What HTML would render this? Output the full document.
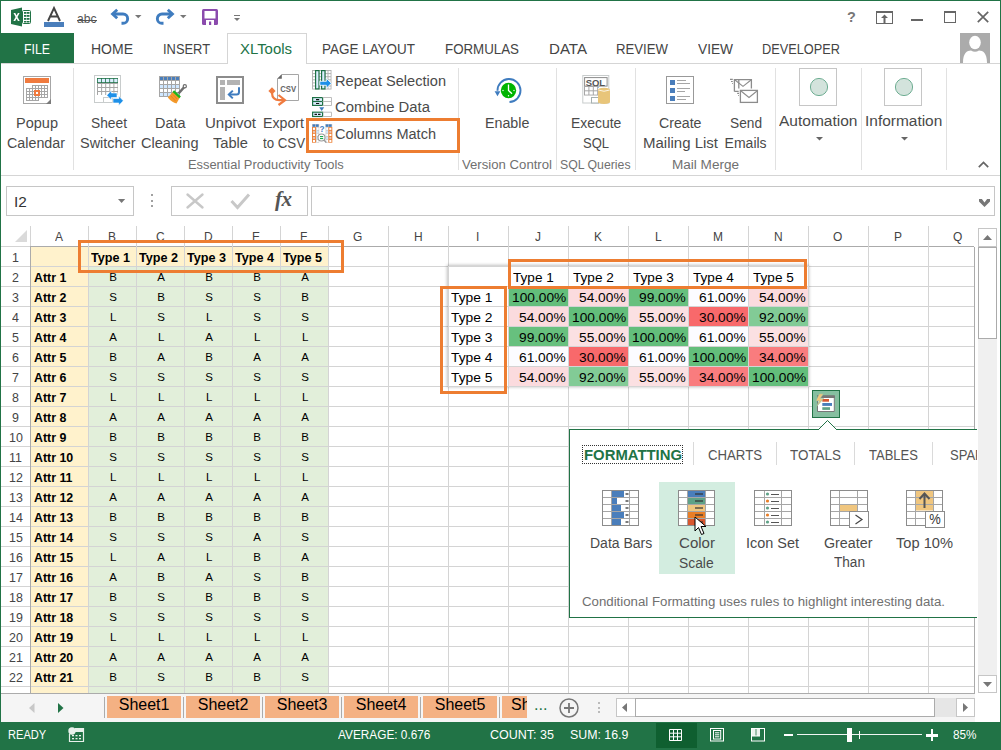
<!DOCTYPE html><html><head><meta charset="utf-8"><title>Excel</title><style>*{margin:0;padding:0;box-sizing:border-box}
html,body{width:1001px;height:750px;overflow:hidden;background:#fff;font-family:"Liberation Sans",sans-serif;position:relative}
.ab{position:absolute}
.t{position:absolute;white-space:nowrap;line-height:1}
svg{position:absolute;overflow:visible}</style></head><body>
<div class="ab" style="left:0px;top:0px;width:1001px;height:722px;border:1px solid #217346;border-bottom:none"></div>
<svg style="left:11px;top:7px" width="21" height="20" viewBox="0 0 21 20"><path d="M0 3 L11 0.5 V19.5 L0 17 Z" fill="#217346"/>
<rect x="11.5" y="3.5" width="8" height="13" rx="1" fill="#fff" stroke="#217346" stroke-width="1"/>
<g fill="#217346"><rect x="13" y="5" width="2.5" height="1.8"/><rect x="16" y="5" width="2.5" height="1.8"/>
<rect x="13" y="8" width="2.5" height="1.8"/><rect x="16" y="8" width="2.5" height="1.8"/>
<rect x="13" y="11" width="2.5" height="1.8"/><rect x="16" y="11" width="2.5" height="1.8"/>
<rect x="13" y="14" width="2.5" height="1.5"/><rect x="16" y="14" width="2.5" height="1.5"/></g>
<path d="M2.5 6 L4.3 6 L5.6 8.6 L6.9 6 L8.6 6 L6.5 10 L8.7 14 L6.9 14 L5.6 11.4 L4.2 14 L2.4 14 L4.6 10 Z" fill="#fff"/></svg>
<svg style="left:47px;top:7px" width="14" height="15" viewBox="0 0 14 15"><path d="M1 14 L7 1 L13 14 M3.3 9.5 H10.7" fill="none" stroke="#444" stroke-width="1.9"/></svg>
<div class="ab" style="left:44px;top:22px;width:20px;height:5px;background:#4A7EBB"></div>
<div class="t" style="left:77.00px;top:11.57px;font-size:13.5px;color:#555;transform:scaleX(0.8959);transform-origin:0 0;">abc</div>
<div class="ab" style="left:77px;top:19.5px;width:20px;height:1px;background:#555"></div>
<svg style="left:110px;top:8px" width="21" height="19" viewBox="0 0 21 19"><path d="M3 6 H13 A4.65 4.65 0 0 1 13 15.3 H11.5" fill="none" stroke="#3F7CBF" stroke-width="2.9"/><path d="M7.2 1.8 L2.6 6 L7.2 10.3" fill="none" stroke="#3F7CBF" stroke-width="2.9"/></svg>
<svg style="left:135px;top:15px" width="7" height="4" viewBox="0 0 7 4"><path d="M0 0 H6.5 L3.25 3.2Z" fill="#777"/></svg>
<svg style="left:155px;top:8px" width="21" height="19" viewBox="0 0 21 19"><path d="M17 6 H7 A4.65 4.65 0 0 0 7 15.3 H8.5" fill="none" stroke="#3F7CBF" stroke-width="2.9"/><path d="M12.8 1.8 L17.4 6 L12.8 10.3" fill="none" stroke="#3F7CBF" stroke-width="2.9"/></svg>
<svg style="left:180px;top:15px" width="7" height="4" viewBox="0 0 7 4"><path d="M0 0 H6.5 L3.25 3.2Z" fill="#777"/></svg>
<svg style="left:202px;top:9px" width="16" height="16" viewBox="0 0 16 16"><rect x="0" y="0" width="16" height="16" rx="1.5" fill="#8B4BAD"/><rect x="2.5" y="2" width="11" height="7.5" fill="#fff"/><rect x="4" y="11" width="8" height="5" fill="#fff"/><rect x="7" y="12.5" width="2.2" height="3.5" fill="#8B4BAD"/></svg>
<svg style="left:234px;top:15px" width="6" height="7" viewBox="0 0 6 7"><rect x="0" y="0" width="6" height="1" fill="#777"/><path d="M0 3 H6 L3 6Z" fill="#777"/></svg>
<div class="t" style="left:846.50px;top:9.18px;font-size:15.5px;color:#777;font-weight:bold;transform:scaleX(0.9294);transform-origin:0 0;">?</div>
<svg style="left:876px;top:11px" width="17" height="13" viewBox="0 0 17 13"><rect x="0.5" y="0.5" width="16" height="12" fill="none" stroke="#666"/><rect x="0" y="0" width="17" height="2" fill="#666"/><path d="M8.5 3.5 L5 7 H7.5 V12 H9.5 V7 H12 Z" fill="#666"/></svg>
<div class="ab" style="left:911px;top:19px;width:12px;height:2px;background:#666"></div>
<svg style="left:944px;top:11px" width="12" height="12" viewBox="0 0 12 12"><rect x="0.5" y="0.5" width="11" height="11" fill="none" stroke="#666"/><rect x="0" y="0" width="12" height="2" fill="#666"/></svg>
<svg style="left:977px;top:11px" width="12" height="12" viewBox="0 0 12 12"><path d="M0.8 0.8 L11.2 11.2 M11.2 0.8 L0.8 11.2" stroke="#666" stroke-width="1.7"/></svg>
<div class="ab" style="left:1px;top:33px;width:73px;height:30px;background:#217346"></div>
<div class="t" style="left:24.00px;top:42.15px;font-size:14px;color:#fff;transform:scaleX(0.8794);transform-origin:0 0;">FILE</div>
<div class="ab" style="left:1px;top:63px;width:999px;height:1px;background:#D5D5D5"></div>
<div class="ab" style="left:227px;top:33px;width:80px;height:31px;background:#fff;border:1px solid #D5D5D5;border-bottom:none"></div>
<div class="t" style="left:91.00px;top:42.15px;font-size:14px;color:#444;">HOME</div>
<div class="t" style="left:163.00px;top:42.15px;font-size:14px;color:#444;transform:scaleX(0.9200);transform-origin:0 0;">INSERT</div>
<div class="t" style="left:240.00px;top:42.15px;font-size:14px;color:#217346;transform:scaleX(1.0663);transform-origin:0 0;">XLTools</div>
<div class="t" style="left:321.50px;top:42.15px;font-size:14px;color:#444;transform:scaleX(0.9615);transform-origin:0 0;">PAGE LAYOUT</div>
<div class="t" style="left:444.50px;top:42.15px;font-size:14px;color:#444;transform:scaleX(0.9513);transform-origin:0 0;">FORMULAS</div>
<div class="t" style="left:548.50px;top:42.15px;font-size:14px;color:#444;transform:scaleX(1.0777);transform-origin:0 0;">DATA</div>
<div class="t" style="left:616.00px;top:42.15px;font-size:14px;color:#444;transform:scaleX(0.9416);transform-origin:0 0;">REVIEW</div>
<div class="t" style="left:697.50px;top:42.15px;font-size:14px;color:#444;transform:scaleX(0.9782);transform-origin:0 0;">VIEW</div>
<div class="t" style="left:761.50px;top:42.15px;font-size:14px;color:#444;transform:scaleX(0.9114);transform-origin:0 0;">DEVELOPER</div>
<svg style="left:960px;top:33px" width="30" height="30" viewBox="0 0 30 30"><rect width="30" height="30" fill="#ABABAB"/><ellipse cx="15" cy="9.5" rx="5.8" ry="6.8" fill="#fff"/><path d="M3 30 C3 20 7 17.5 11 17.5 Q15 20 19 17.5 C23 17.5 27 20 27 30Z" fill="#fff"/></svg>
<div class="ab" style="left:1px;top:175px;width:999px;height:1px;background:#D5D5D5"></div>
<div class="ab" style="left:73px;top:68px;width:1px;height:102px;background:#E1E1E1"></div>
<div class="ab" style="left:458px;top:68px;width:1px;height:102px;background:#E1E1E1"></div>
<div class="ab" style="left:556px;top:68px;width:1px;height:102px;background:#E1E1E1"></div>
<div class="ab" style="left:635px;top:68px;width:1px;height:102px;background:#E1E1E1"></div>
<div class="ab" style="left:775px;top:68px;width:1px;height:102px;background:#E1E1E1"></div>
<div class="ab" style="left:861px;top:68px;width:1px;height:102px;background:#E1E1E1"></div>
<div class="ab" style="left:946px;top:68px;width:1px;height:102px;background:#E1E1E1"></div>
<div class="t" style="left:15.50px;top:116.15px;font-size:14px;color:#4A4A4A;transform:scaleX(1.0375);transform-origin:0 0;">Popup</div>
<div class="t" style="left:7.00px;top:136.15px;font-size:14px;color:#4A4A4A;transform:scaleX(1.0209);transform-origin:0 0;">Calendar</div>
<div class="t" style="left:90.50px;top:116.15px;font-size:14px;color:#4A4A4A;transform:scaleX(0.9840);transform-origin:0 0;">Sheet</div>
<div class="t" style="left:80.00px;top:136.15px;font-size:14px;color:#4A4A4A;transform:scaleX(1.0339);transform-origin:0 0;">Switcher</div>
<div class="t" style="left:154.50px;top:116.15px;font-size:14px;color:#4A4A4A;transform:scaleX(1.0314);transform-origin:0 0;">Data</div>
<div class="t" style="left:141.00px;top:136.15px;font-size:14px;color:#4A4A4A;transform:scaleX(1.0405);transform-origin:0 0;">Cleaning</div>
<div class="t" style="left:205.00px;top:116.15px;font-size:14px;color:#4A4A4A;transform:scaleX(1.0744);transform-origin:0 0;">Unpivot</div>
<div class="t" style="left:213.00px;top:136.15px;font-size:14px;color:#4A4A4A;transform:scaleX(1.0458);transform-origin:0 0;">Table</div>
<div class="t" style="left:262.50px;top:116.15px;font-size:14px;color:#4A4A4A;transform:scaleX(1.0133);transform-origin:0 0;">Export</div>
<div class="t" style="left:262.50px;top:136.15px;font-size:14px;color:#4A4A4A;transform:scaleX(0.9470);transform-origin:0 0;">to CSV</div>
<div class="t" style="left:335.40px;top:73.75px;font-size:14px;color:#4A4A4A;transform:scaleX(1.0410);transform-origin:0 0;">Repeat Selection</div>
<div class="t" style="left:335.40px;top:100.45px;font-size:14px;color:#4A4A4A;transform:scaleX(1.0616);transform-origin:0 0;">Combine Data</div>
<div class="t" style="left:335.40px;top:127.15px;font-size:14px;color:#4A4A4A;transform:scaleX(1.0385);transform-origin:0 0;">Columns Match</div>
<div class="t" style="left:187.50px;top:159.02px;font-size:12.5px;color:#707070;transform:scaleX(1.0300);transform-origin:0 0;">Essential Productivity Tools</div>
<div class="t" style="left:484.60px;top:115.95px;font-size:14px;color:#4A4A4A;transform:scaleX(1.0185);transform-origin:0 0;">Enable</div>
<div class="t" style="left:462.40px;top:159.02px;font-size:12.5px;color:#707070;transform:scaleX(1.0531);transform-origin:0 0;">Version Control</div>
<div class="t" style="left:570.50px;top:115.95px;font-size:14px;color:#4A4A4A;transform:scaleX(0.9943);transform-origin:0 0;">Execute</div>
<div class="t" style="left:583.00px;top:135.65px;font-size:14px;color:#4A4A4A;transform:scaleX(0.9281);transform-origin:0 0;">SQL</div>
<div class="t" style="left:560.40px;top:159.02px;font-size:12.5px;color:#707070;transform:scaleX(0.9827);transform-origin:0 0;">SQL Queries</div>
<div class="t" style="left:659.20px;top:115.95px;font-size:14px;color:#4A4A4A;transform:scaleX(1.0114);transform-origin:0 0;">Create</div>
<div class="t" style="left:642.60px;top:135.65px;font-size:14px;color:#4A4A4A;transform:scaleX(1.0710);transform-origin:0 0;">Mailing List</div>
<div class="t" style="left:729.80px;top:115.95px;font-size:14px;color:#4A4A4A;transform:scaleX(0.9787);transform-origin:0 0;">Send</div>
<div class="t" style="left:724.60px;top:135.65px;font-size:14px;color:#4A4A4A;">Emails</div>
<div class="t" style="left:671.60px;top:159.02px;font-size:12.5px;color:#707070;transform:scaleX(1.0837);transform-origin:0 0;">Mail Merge</div>
<div class="t" style="left:779.20px;top:113.95px;font-size:14px;color:#4A4A4A;transform:scaleX(1.1084);transform-origin:0 0;">Automation</div>
<div class="t" style="left:865.30px;top:113.95px;font-size:14px;color:#4A4A4A;transform:scaleX(1.1037);transform-origin:0 0;">Information</div>
<div class="ab" style="left:306px;top:118px;width:154px;height:35px;border:3px solid #ED7D31"></div>
<div class="ab" style="left:799px;top:68px;width:38px;height:38px;border:1px solid #C6C6C6;background:#fff"></div>
<svg style="left:809px;top:77px" width="20" height="20" viewBox="0 0 20 20"><circle cx="10" cy="10" r="8.6" fill="#D3E3DC" stroke="#6FAE93" stroke-width="1"/></svg>
<svg style="left:815.5px;top:137px" width="7" height="4" viewBox="0 0 7 4"><path d="M0 0 H7 L3.5 3.5Z" fill="#666"/></svg>
<div class="ab" style="left:884px;top:68px;width:38px;height:38px;border:1px solid #C6C6C6;background:#fff"></div>
<svg style="left:894px;top:77px" width="20" height="20" viewBox="0 0 20 20"><circle cx="10" cy="10" r="8.6" fill="#D3E3DC" stroke="#6FAE93" stroke-width="1"/></svg>
<svg style="left:900.5px;top:137px" width="7" height="4" viewBox="0 0 7 4"><path d="M0 0 H7 L3.5 3.5Z" fill="#666"/></svg>
<svg style="left:978px;top:161px" width="11" height="7" viewBox="0 0 11 7"><path d="M0.8 6.2 L5.5 1.5 L10.2 6.2" fill="none" stroke="#666" stroke-width="1.7"/></svg>
<svg style="left:23px;top:76px" width="28" height="28" viewBox="0 0 28 28"><rect x="0.5" y="0.5" width="27" height="27" fill="#fff" stroke="#A6A6A6"/><rect x="2" y="2" width="24" height="5" fill="#F07B3F"/><rect x="9" y="9" width="16" height="4" fill="#A6A6A6"/><rect x="10" y="10" width="2" height="2" fill="#fff"/><rect x="13" y="10" width="2" height="2" fill="#fff"/><rect x="16" y="10" width="2" height="2" fill="#fff"/><rect x="19" y="10" width="2" height="2" fill="#fff"/><rect x="22" y="10" width="2" height="2" fill="#fff"/><rect x="3" y="12" width="22" height="4" fill="#A6A6A6"/><rect x="4" y="13" width="2" height="2" fill="#fff"/><rect x="7" y="13" width="2" height="2" fill="#fff"/><rect x="10" y="13" width="2" height="2" fill="#fff"/><rect x="13" y="13" width="2" height="2" fill="#fff"/><rect x="16" y="13" width="2" height="2" fill="#fff"/><rect x="19" y="13" width="2" height="2" fill="#fff"/><rect x="22" y="13" width="2" height="2" fill="#fff"/><rect x="3" y="15" width="22" height="4" fill="#A6A6A6"/><rect x="4" y="16" width="2" height="2" fill="#fff"/><rect x="7" y="16" width="2" height="2" fill="#fff"/><rect x="10" y="16" width="2" height="2" fill="#fff"/><rect x="13" y="16" width="2" height="2" fill="#fff"/><rect x="16" y="16" width="2" height="2" fill="#fff"/><rect x="19" y="16" width="2" height="2" fill="#fff"/><rect x="22" y="16" width="2" height="2" fill="#fff"/><rect x="3" y="18" width="22" height="4" fill="#A6A6A6"/><rect x="4" y="19" width="2" height="2" fill="#fff"/><rect x="7" y="19" width="2" height="2" fill="#fff"/><rect x="10" y="19" width="2" height="2" fill="#fff"/><rect x="13" y="19" width="2" height="2" fill="#fff"/><rect x="16" y="19" width="2" height="2" fill="#fff"/><rect x="19" y="19" width="2" height="2" fill="#fff"/><rect x="22" y="19" width="2" height="2" fill="#fff"/><rect x="3" y="21" width="13" height="4" fill="#A6A6A6"/><rect x="4" y="22" width="2" height="2" fill="#fff"/><rect x="7" y="22" width="2" height="2" fill="#fff"/><rect x="10" y="22" width="2" height="2" fill="#fff"/><rect x="13" y="22" width="2" height="2" fill="#fff"/><rect x="11" y="14" width="6" height="6" fill="#F07B3F"/><rect x="13" y="16" width="2" height="2" fill="#fff"/><path d="M23 28 L28 23 V28Z" fill="#7A7A7A"/></svg>
<svg style="left:94px;top:75px" width="30" height="31" viewBox="0 0 30 31"><rect x="0.5" y="0.5" width="26" height="27" fill="#fff" stroke="#C8CCCC"/><rect x="3" y="3" width="21" height="5" fill="#1E7145"/><rect x="3.8" y="3.8" width="3.3" height="3.4" fill="#DDEEFF"/><rect x="7.9" y="3.8" width="3.3" height="3.4" fill="#DDEEFF"/><rect x="12.0" y="3.8" width="3.3" height="3.4" fill="#DDEEFF"/><rect x="16.1" y="3.8" width="3.3" height="3.4" fill="#DDEEFF"/><rect x="20.2" y="3.8" width="3.3" height="3.4" fill="#DDEEFF"/><rect x="3" y="8" width="21" height="12" fill="#A6A6A6"/><rect x="4.0" y="9" width="3.1" height="3" fill="#fff"/><rect x="8.1" y="9" width="3.1" height="3" fill="#fff"/><rect x="12.2" y="9" width="3.1" height="3" fill="#fff"/><rect x="16.3" y="9" width="3.1" height="3" fill="#fff"/><rect x="20.4" y="9" width="3.1" height="3" fill="#fff"/><rect x="4.0" y="13" width="3.1" height="3" fill="#fff"/><rect x="8.1" y="13" width="3.1" height="3" fill="#fff"/><rect x="12.2" y="13" width="3.1" height="3" fill="#fff"/><rect x="16.3" y="13" width="3.1" height="3" fill="#fff"/><rect x="20.4" y="13" width="3.1" height="3" fill="#fff"/><rect x="4.0" y="17" width="3.1" height="3" fill="#fff"/><rect x="8.1" y="17" width="3.1" height="3" fill="#fff"/><rect x="12.2" y="17" width="3.1" height="3" fill="#fff"/><rect x="16.3" y="17" width="3.1" height="3" fill="#fff"/><rect x="20.4" y="17" width="3.1" height="3" fill="#fff"/><rect x="9.5" y="22.5" width="9" height="5" fill="#fff" stroke="#C8CCCC"/><path d="M12.8 20.3 L17.3 15.5 V18 H23 V22.5 H17.3 V25 Z" fill="#1E90E8" stroke="#fff" stroke-width="0.6"/><path d="M29.3 25.8 L24.8 21 V23.5 H19 V28 H24.8 V30.5 Z" fill="#1E90E8" stroke="#fff" stroke-width="0.6"/></svg>
<svg style="left:159px;top:76px" width="27" height="28" viewBox="0 0 27 28"><rect x="0" y="0" width="21" height="21" fill="#A6A6A6"/><rect x="1" y="1" width="3" height="3" fill="#4A7EBB"/><rect x="5" y="1" width="3" height="3" fill="#4A7EBB"/><rect x="9" y="1" width="3" height="3" fill="#4A7EBB"/><rect x="13" y="1" width="3" height="3" fill="#4A7EBB"/><rect x="17" y="1" width="3" height="3" fill="#4A7EBB"/><rect x="1" y="5" width="3" height="3" fill="#fff"/><rect x="5" y="5" width="3" height="3" fill="#fff"/><rect x="9" y="5" width="3" height="3" fill="#fff"/><rect x="13" y="5" width="3" height="3" fill="#fff"/><rect x="17" y="5" width="3" height="3" fill="#fff"/><rect x="1" y="9" width="3" height="3" fill="#CFE7FF"/><rect x="5" y="9" width="3" height="3" fill="#CFE7FF"/><rect x="9" y="9" width="3" height="3" fill="#CFE7FF"/><rect x="13" y="9" width="3" height="3" fill="#CFE7FF"/><rect x="17" y="9" width="3" height="3" fill="#CFE7FF"/><rect x="1" y="13" width="3" height="3" fill="#fff"/><rect x="5" y="13" width="3" height="3" fill="#fff"/><rect x="9" y="13" width="3" height="3" fill="#fff"/><rect x="13" y="13" width="3" height="3" fill="#fff"/><rect x="17" y="13" width="3" height="3" fill="#fff"/><rect x="1" y="17" width="3" height="3" fill="#CFE7FF"/><rect x="5" y="17" width="3" height="3" fill="#CFE7FF"/><rect x="9" y="17" width="3" height="3" fill="#CFE7FF"/><rect x="13" y="17" width="3" height="3" fill="#CFE7FF"/><rect x="17" y="17" width="3" height="3" fill="#CFE7FF"/><path d="M19.5 17.5 L25.3 11" stroke="#6E6E6E" stroke-width="2.6"/><circle cx="25.8" cy="10.3" r="1.6" fill="#fff" stroke="#6E6E6E" stroke-width="1.2"/><path d="M14.5 15.3 L21 21.3 L17.5 27.5 Q13 26.5 8.8 21.5 Z" fill="#F39A2B"/><path d="M12 20 L16.5 25 M14 18.5 L18 23" stroke="#E8781E" stroke-width="0.8"/><path d="M14.3 15.2 L21.1 21.4" stroke="#1DB51D" stroke-width="2.4"/></svg>
<svg style="left:216px;top:76px" width="28" height="28" viewBox="0 0 28 28"><rect x="1" y="1" width="26" height="26" fill="#fff" stroke="#8C8C8C" stroke-width="2"/><rect x="4" y="4" width="5" height="5" fill="#B3B3B3"/><rect x="11" y="4" width="13" height="5" fill="#B3B3B3"/><rect x="4" y="11" width="5" height="13" fill="#B3B3B3"/><path d="M23 11.2 V16 Q23 18.5 20.5 18.5 H13" fill="none" stroke="#3F7CBF" stroke-width="2"/><path d="M16.8 14.6 L12.8 18.5 L16.8 22.4" fill="none" stroke="#3F7CBF" stroke-width="2"/></svg>
<svg style="left:264px;top:70px" width="36" height="36" viewBox="0 0 36 36"><path d="M17.8 4.5 H34.5 V30.5 H13.5 V8.8 Z" fill="#fff" stroke="#A6A6A6"/><path d="M13.3 8.8 L17.8 4.3 V8.8 Z" fill="#666"/><text x="16.2" y="21.6" font-family="Liberation Sans" font-weight="bold" font-size="9" fill="#666" textLength="16" lengthAdjust="spacingAndGlyphs">CSV</text><path d="M8 17.3 L11.6 21 L8 24.6 L4.4 21 Z" fill="#F07B3F"/><path d="M8 23 Q8.2 30 15.5 30.2 H21" fill="none" stroke="#F07B3F" stroke-width="2.2"/><path d="M14.5 25 L21 30.2 L14.5 35" fill="none" stroke="#F07B3F" stroke-width="2.2"/></svg>
<svg style="left:312px;top:70px" width="20" height="20" viewBox="0 0 20 20"><rect x="0" y="0" width="19.5" height="19.5" fill="#B3B3B3"/><rect x="1.0" y="1.0" width="2.1" height="2.1" fill="#fff"/><rect x="4.1" y="1.0" width="2.1" height="2.1" fill="#fff"/><rect x="7.2" y="1.0" width="2.1" height="2.1" fill="#fff"/><rect x="10.3" y="1.0" width="2.1" height="2.1" fill="#fff"/><rect x="13.4" y="1.0" width="2.1" height="2.1" fill="#fff"/><rect x="16.5" y="1.0" width="2.1" height="2.1" fill="#fff"/><rect x="1.0" y="4.1" width="2.1" height="2.1" fill="#fff"/><rect x="4.1" y="4.1" width="2.1" height="2.1" fill="#fff"/><rect x="7.2" y="4.1" width="2.1" height="2.1" fill="#fff"/><rect x="10.3" y="4.1" width="2.1" height="2.1" fill="#fff"/><rect x="13.4" y="4.1" width="2.1" height="2.1" fill="#fff"/><rect x="16.5" y="4.1" width="2.1" height="2.1" fill="#fff"/><rect x="1.0" y="7.2" width="2.1" height="2.1" fill="#fff"/><rect x="4.1" y="7.2" width="2.1" height="2.1" fill="#fff"/><rect x="7.2" y="7.2" width="2.1" height="2.1" fill="#fff"/><rect x="10.3" y="7.2" width="2.1" height="2.1" fill="#fff"/><rect x="13.4" y="7.2" width="2.1" height="2.1" fill="#fff"/><rect x="16.5" y="7.2" width="2.1" height="2.1" fill="#fff"/><rect x="1.0" y="10.3" width="2.1" height="2.1" fill="#fff"/><rect x="4.1" y="10.3" width="2.1" height="2.1" fill="#fff"/><rect x="7.2" y="10.3" width="2.1" height="2.1" fill="#fff"/><rect x="10.3" y="10.3" width="2.1" height="2.1" fill="#fff"/><rect x="13.4" y="10.3" width="2.1" height="2.1" fill="#fff"/><rect x="16.5" y="10.3" width="2.1" height="2.1" fill="#fff"/><rect x="1.0" y="13.4" width="2.1" height="2.1" fill="#fff"/><rect x="4.1" y="13.4" width="2.1" height="2.1" fill="#fff"/><rect x="7.2" y="13.4" width="2.1" height="2.1" fill="#fff"/><rect x="10.3" y="13.4" width="2.1" height="2.1" fill="#fff"/><rect x="13.4" y="13.4" width="2.1" height="2.1" fill="#fff"/><rect x="16.5" y="13.4" width="2.1" height="2.1" fill="#fff"/><rect x="1.0" y="16.5" width="2.1" height="2.1" fill="#fff"/><rect x="4.1" y="16.5" width="2.1" height="2.1" fill="#fff"/><rect x="7.2" y="16.5" width="2.1" height="2.1" fill="#fff"/><rect x="10.3" y="16.5" width="2.1" height="2.1" fill="#fff"/><rect x="13.4" y="16.5" width="2.1" height="2.1" fill="#fff"/><rect x="16.5" y="16.5" width="2.1" height="2.1" fill="#fff"/><rect x="3.6" y="0.6" width="3.4" height="18.3" fill="#DDEEFF" stroke="#1E7145" stroke-width="1.2"/><rect x="9.6" y="0.6" width="3.4" height="18.3" fill="#DDEEFF" stroke="#1E7145" stroke-width="1.2"/><path d="M7.8 11.3 H14.3 V8.3 L19.3 13.3 L14.3 18.3 V15.3 H7.8 Z" fill="#1E90E8" stroke="#fff" stroke-width="0.8"/></svg>
<svg style="left:312px;top:97px" width="21" height="20" viewBox="0 0 21 20"><rect x="0.6" y="0.6" width="10" height="7.8" fill="#DDEEFF" stroke="#1E7145" stroke-width="1.2"/><path d="M0.6 4.5 H10.6" stroke="#1E7145" stroke-width="1.2"/><path d="M10.6 0.5 H19.5 V8.5 H10.6 M10.6 4.5 H19.5" fill="none" stroke="#BDBDBD"/><path d="M4 2.6 H7.2 M4 6.5 H7.2" stroke="#111" stroke-width="1.2"/><path d="M7.2 10.2 H12.2 L9.7 14 Z" fill="#3F7CBF"/><rect x="0.6" y="15.2" width="10" height="4.3" fill="#DDEEFF" stroke="#1E7145" stroke-width="1.2"/><path d="M10.6 15.2 H19.5 V19.5 H10.6" fill="none" stroke="#BDBDBD"/><path d="M2.5 17.4 H5 M6 17.4 H8.5" stroke="#111" stroke-width="1.2"/></svg>
<svg style="left:312px;top:124px" width="21" height="20" viewBox="0 0 21 20"><rect x="0" y="0" width="7.2" height="3" fill="#C8C8C8"/><rect x="13.2" y="0" width="7" height="3" fill="#C8C8C8"/><rect x="0.6" y="0.4" width="2.7" height="2.4" fill="#3F7CBF"/><rect x="4" y="0.4" width="2.6" height="2.4" fill="#3F7CBF"/><rect x="13.8" y="0.4" width="2.5" height="2.4" fill="#3F7CBF"/><rect x="16.8" y="0.4" width="2.8" height="2.4" fill="#3F7CBF"/><rect x="4.2" y="3" width="3" height="15.7" fill="#C8C8C8"/><rect x="4.8" y="3.60" width="1.9" height="2.3" fill="#fff"/><rect x="4.8" y="6.65" width="1.9" height="2.3" fill="#CFE7FF"/><rect x="4.8" y="9.70" width="1.9" height="2.3" fill="#fff"/><rect x="4.8" y="12.75" width="1.9" height="2.3" fill="#CFE7FF"/><rect x="4.8" y="15.80" width="1.9" height="2.3" fill="#fff"/><rect x="13.6" y="3" width="3" height="15.7" fill="#C8C8C8"/><rect x="14.2" y="3.60" width="1.9" height="2.3" fill="#fff"/><rect x="14.2" y="6.65" width="1.9" height="2.3" fill="#CFE7FF"/><rect x="14.2" y="9.70" width="1.9" height="2.3" fill="#fff"/><rect x="14.2" y="12.75" width="1.9" height="2.3" fill="#CFE7FF"/><rect x="14.2" y="15.80" width="1.9" height="2.3" fill="#fff"/><rect x="0" y="3" width="3.9" height="15.7" fill="#ED7D31"/><rect x="0.9" y="3.70" width="2.1" height="2.2" fill="#fff"/><rect x="0.9" y="6.75" width="2.1" height="2.2" fill="#E6C3B5"/><rect x="0.9" y="9.80" width="2.1" height="2.2" fill="#fff"/><rect x="0.9" y="12.85" width="2.1" height="2.2" fill="#E6C3B5"/><rect x="0.9" y="15.90" width="2.1" height="2.2" fill="#fff"/><rect x="16.4" y="3" width="3.9" height="15.7" fill="#ED7D31"/><rect x="17.3" y="3.70" width="2.1" height="2.2" fill="#fff"/><rect x="17.3" y="6.75" width="2.1" height="2.2" fill="#E6C3B5"/><rect x="17.3" y="9.80" width="2.1" height="2.2" fill="#fff"/><rect x="17.3" y="12.85" width="2.1" height="2.2" fill="#E6C3B5"/><rect x="17.3" y="15.90" width="2.1" height="2.2" fill="#fff"/><text x="7.4" y="8" font-family="Liberation Sans" font-weight="bold" font-size="9" fill="#3F7CBF" textLength="5" lengthAdjust="spacingAndGlyphs">?</text><circle cx="9.5" cy="13.5" r="3.5" fill="#fff" stroke="#999" stroke-width="1.1"/><path d="M8 12.6 H11.2 M8 14.6 H11.2" stroke="#00A33C" stroke-width="1"/><path d="M12.2 16.2 L14.3 18.6" stroke="#999" stroke-width="1.4"/></svg>
<svg style="left:490px;top:72px" width="36" height="36" viewBox="0 0 36 36"><path d="M19.5 30 A11.5 11.5 0 1 0 7.5 18.8" fill="none" stroke="#3F7CBF" stroke-width="1.9"/><path d="M4.6 19.3 H10.4 L7.5 24.2 Z" fill="#3F7CBF"/><circle cx="18.5" cy="18.5" r="7.7" fill="#00B400"/><path d="M18.5 12.5 V18.5 L22 21.8" fill="none" stroke="#fff" stroke-width="1.3"/><circle cx="13" cy="18.5" r="0.7" fill="#fff"/><circle cx="24" cy="18.5" r="0.7" fill="#fff"/><circle cx="18.5" cy="23.8" r="0.7" fill="#fff"/></svg>
<svg style="left:578px;top:70px" width="36" height="36" viewBox="0 0 36 36"><rect x="4.8" y="5.5" width="26" height="27.5" fill="#fff" stroke="#C8CCCC"/><rect x="6.6" y="7.6" width="22.5" height="8.5" fill="#fff" stroke="#8C8C8C"/><text x="7.7" y="15.8" font-family="Liberation Sans" font-weight="bold" font-size="9.5" fill="#555" textLength="19.4" lengthAdjust="spacingAndGlyphs">SQL</text><rect x="6" y="16" width="14" height="9.5" fill="#A6A6A6"/><rect x="7.0" y="17.0" width="3.4" height="3.3" fill="#fff"/><rect x="11.4" y="17.0" width="3.4" height="3.3" fill="#fff"/><rect x="15.8" y="17.0" width="3.4" height="3.3" fill="#fff"/><rect x="7.0" y="21.3" width="3.4" height="3.3" fill="#fff"/><rect x="11.4" y="21.3" width="3.4" height="3.3" fill="#fff"/><rect x="15.8" y="21.3" width="3.4" height="3.3" fill="#fff"/><rect x="13.5" y="27.5" width="7" height="5.5" fill="#fff" stroke="#A6B0B0"/><path d="M20 19 Q26 16.5 32 19 V32.5 Q26 35.5 20 32.5 Z" fill="#E8C57A"/><path d="M20.3 20 Q26 22.5 31.7 20" fill="none" stroke="#fff" stroke-width="0.8"/></svg>
<svg style="left:666px;top:76px" width="28" height="28" viewBox="0 0 28 28"><rect x="0.5" y="0.5" width="27" height="27" fill="#fff" stroke="#999"/><g fill="#4A7EBB"><rect x="4" y="4" width="5" height="5"/><rect x="4" y="12" width="5" height="5"/><rect x="4" y="20" width="5" height="5"/></g><g stroke="#A6A6A6"><path d="M11 4.5 H20 M11 7.5 H24 M11 12.5 H24 M11 15.5 H19 M11 20.5 H24 M11 23.5 H20"/></g></svg>
<svg style="left:725px;top:72px" width="36" height="36" viewBox="0 0 36 36"><path d="M13.8 16.5 V7.6 H26.4 V16.6 M9.4 19.4 V7.6 H26.4 M9.4 19.4 H13.7" fill="none" stroke="#8C8C8C" stroke-width="1.3"/><path d="M10 8 L18 14.4 L26 8" fill="none" stroke="#8C8C8C" stroke-width="1.1"/><rect x="15.4" y="18.4" width="17" height="12" fill="#fff" stroke="#8C8C8C" stroke-width="1.3"/><path d="M16 19 L24 25.5 L32 19" fill="none" stroke="#8C8C8C" stroke-width="1.1"/><path d="M5 7.4 H7.8 M6 9.5 H7.8 M7.1 11.5 H7.9 M12.2 21.4 H14 M13 23.5 H13.8" stroke="#8C8C8C" stroke-width="1.1"/></svg>
<div class="ab" style="left:6px;top:186px;width:128px;height:30px;border:1px solid #C6C6C6;background:#fff"></div>
<div class="t" style="left:13.60px;top:194.30px;font-size:15px;color:#333;transform:scaleX(1.0232);transform-origin:0 0;">I2</div>
<svg style="left:118px;top:199px" width="7" height="4" viewBox="0 0 7 4"><path d="M0 0 H7.2 L3.6 4Z" fill="#777"/></svg>
<div class="ab" style="left:151px;top:194px;width:2px;height:2px;background:#A0A0A0"></div>
<div class="ab" style="left:151px;top:199.5px;width:2px;height:2px;background:#A0A0A0"></div>
<div class="ab" style="left:151px;top:205px;width:2px;height:2px;background:#A0A0A0"></div>
<div class="ab" style="left:171px;top:186px;width:137px;height:30px;border:1px solid #C6C6C6;background:#fff"></div>
<svg style="left:186px;top:193px" width="18" height="16" viewBox="0 0 18 16"><path d="M1.5 1.5 L16.5 14.5 M16.5 1.5 L1.5 14.5" stroke="#C8C8C8" stroke-width="2.4" stroke-linecap="round"/></svg>
<svg style="left:230px;top:193px" width="20" height="17" viewBox="0 0 20 17"><path d="M1.5 8 L7.5 14.5 L19 1.5" fill="none" stroke="#C8C8C8" stroke-width="3"/></svg>
<div class="t" style="left:275px;top:189px;font-size:21px;color:#555;font-weight:bold;font-family:'Liberation Serif',serif;font-style:italic;letter-spacing:-0.5px">fx</div>
<div class="ab" style="left:311px;top:186px;width:684px;height:30px;border:1px solid #C6C6C6;background:#fff"></div>
<svg style="left:979px;top:199px" width="11" height="8" viewBox="0 0 11 8"><path d="M0 0 H2.9 L5.5 3.4 L8.1 0 H11 V2.4 L5.5 8 L0 2.4Z" fill="#777"/></svg>
<div class="ab" style="left:31px;top:247px;width:57px;height:446px;background:#FFF2CC"></div>
<div class="ab" style="left:89px;top:247px;width:239px;height:20px;background:#FFF2CC"></div>
<div class="ab" style="left:89px;top:267px;width:239px;height:426px;background:#E2EFDA"></div>
<div class="ab" style="left:31px;top:246px;width:944px;height:1px;#ABABAB"></div>
<div class="ab" style="left:31px;top:266px;width:944px;height:1px;background:#D4D4D4"></div>
<div class="ab" style="left:31px;top:286px;width:944px;height:1px;background:#D4D4D4"></div>
<div class="ab" style="left:31px;top:306px;width:944px;height:1px;background:#D4D4D4"></div>
<div class="ab" style="left:31px;top:326px;width:944px;height:1px;background:#D4D4D4"></div>
<div class="ab" style="left:31px;top:346px;width:944px;height:1px;background:#D4D4D4"></div>
<div class="ab" style="left:31px;top:366px;width:944px;height:1px;background:#D4D4D4"></div>
<div class="ab" style="left:31px;top:386px;width:944px;height:1px;background:#D4D4D4"></div>
<div class="ab" style="left:31px;top:406px;width:944px;height:1px;background:#D4D4D4"></div>
<div class="ab" style="left:31px;top:426px;width:944px;height:1px;background:#D4D4D4"></div>
<div class="ab" style="left:31px;top:446px;width:944px;height:1px;background:#D4D4D4"></div>
<div class="ab" style="left:31px;top:466px;width:944px;height:1px;background:#D4D4D4"></div>
<div class="ab" style="left:31px;top:486px;width:944px;height:1px;background:#D4D4D4"></div>
<div class="ab" style="left:31px;top:506px;width:944px;height:1px;background:#D4D4D4"></div>
<div class="ab" style="left:31px;top:526px;width:944px;height:1px;background:#D4D4D4"></div>
<div class="ab" style="left:31px;top:546px;width:944px;height:1px;background:#D4D4D4"></div>
<div class="ab" style="left:31px;top:566px;width:944px;height:1px;background:#D4D4D4"></div>
<div class="ab" style="left:31px;top:586px;width:944px;height:1px;background:#D4D4D4"></div>
<div class="ab" style="left:31px;top:606px;width:944px;height:1px;background:#D4D4D4"></div>
<div class="ab" style="left:31px;top:626px;width:944px;height:1px;background:#D4D4D4"></div>
<div class="ab" style="left:31px;top:646px;width:944px;height:1px;background:#D4D4D4"></div>
<div class="ab" style="left:31px;top:666px;width:944px;height:1px;background:#D4D4D4"></div>
<div class="ab" style="left:31px;top:686px;width:944px;height:1px;background:#D4D4D4"></div>
<div class="ab" style="left:1px;top:246px;width:29px;height:1px;background:#D4D4D4"></div>
<div class="ab" style="left:30px;top:246px;width:944px;height:1px;background:#ABABAB"></div>
<div class="ab" style="left:1px;top:266px;width:29px;height:1px;background:#D4D4D4"></div>
<div class="ab" style="left:1px;top:286px;width:29px;height:1px;background:#D4D4D4"></div>
<div class="ab" style="left:1px;top:306px;width:29px;height:1px;background:#D4D4D4"></div>
<div class="ab" style="left:1px;top:326px;width:29px;height:1px;background:#D4D4D4"></div>
<div class="ab" style="left:1px;top:346px;width:29px;height:1px;background:#D4D4D4"></div>
<div class="ab" style="left:1px;top:366px;width:29px;height:1px;background:#D4D4D4"></div>
<div class="ab" style="left:1px;top:386px;width:29px;height:1px;background:#D4D4D4"></div>
<div class="ab" style="left:1px;top:406px;width:29px;height:1px;background:#D4D4D4"></div>
<div class="ab" style="left:1px;top:426px;width:29px;height:1px;background:#D4D4D4"></div>
<div class="ab" style="left:1px;top:446px;width:29px;height:1px;background:#D4D4D4"></div>
<div class="ab" style="left:1px;top:466px;width:29px;height:1px;background:#D4D4D4"></div>
<div class="ab" style="left:1px;top:486px;width:29px;height:1px;background:#D4D4D4"></div>
<div class="ab" style="left:1px;top:506px;width:29px;height:1px;background:#D4D4D4"></div>
<div class="ab" style="left:1px;top:526px;width:29px;height:1px;background:#D4D4D4"></div>
<div class="ab" style="left:1px;top:546px;width:29px;height:1px;background:#D4D4D4"></div>
<div class="ab" style="left:1px;top:566px;width:29px;height:1px;background:#D4D4D4"></div>
<div class="ab" style="left:1px;top:586px;width:29px;height:1px;background:#D4D4D4"></div>
<div class="ab" style="left:1px;top:606px;width:29px;height:1px;background:#D4D4D4"></div>
<div class="ab" style="left:1px;top:626px;width:29px;height:1px;background:#D4D4D4"></div>
<div class="ab" style="left:1px;top:646px;width:29px;height:1px;background:#D4D4D4"></div>
<div class="ab" style="left:1px;top:666px;width:29px;height:1px;background:#D4D4D4"></div>
<div class="ab" style="left:1px;top:686px;width:29px;height:1px;background:#D4D4D4"></div>
<div class="ab" style="left:88px;top:226px;width:1px;height:467px;background:#D4D4D4"></div>
<div class="ab" style="left:136px;top:226px;width:1px;height:467px;background:#D4D4D4"></div>
<div class="ab" style="left:184px;top:226px;width:1px;height:467px;background:#D4D4D4"></div>
<div class="ab" style="left:232px;top:226px;width:1px;height:467px;background:#D4D4D4"></div>
<div class="ab" style="left:280px;top:226px;width:1px;height:467px;background:#D4D4D4"></div>
<div class="ab" style="left:328px;top:226px;width:1px;height:467px;background:#D4D4D4"></div>
<div class="ab" style="left:388px;top:226px;width:1px;height:467px;background:#D4D4D4"></div>
<div class="ab" style="left:448px;top:226px;width:1px;height:467px;background:#D4D4D4"></div>
<div class="ab" style="left:508px;top:226px;width:1px;height:467px;background:#D4D4D4"></div>
<div class="ab" style="left:568px;top:226px;width:1px;height:467px;background:#D4D4D4"></div>
<div class="ab" style="left:628px;top:226px;width:1px;height:467px;background:#D4D4D4"></div>
<div class="ab" style="left:688px;top:226px;width:1px;height:467px;background:#D4D4D4"></div>
<div class="ab" style="left:748px;top:226px;width:1px;height:467px;background:#D4D4D4"></div>
<div class="ab" style="left:808px;top:226px;width:1px;height:467px;background:#D4D4D4"></div>
<div class="ab" style="left:868px;top:226px;width:1px;height:467px;background:#D4D4D4"></div>
<div class="ab" style="left:928px;top:226px;width:1px;height:467px;background:#D4D4D4"></div>
<div class="ab" style="left:30px;top:226px;width:1px;height:20px;background:#D4D4D4"></div>
<div class="ab" style="left:30px;top:246px;width:1px;height:447px;background:#ABABAB"></div>
<svg style="left:15px;top:230px" width="13" height="13" viewBox="0 0 13 13"><path d="M12 0 V12 H0Z" fill="#DADADA"/></svg>
<div class="t" style="left:55.01px;top:229.74px;font-size:13.3px;color:#444;transform:scaleX(0.9000);transform-origin:0 0;">A</div>
<div class="t" style="left:108.01px;top:229.74px;font-size:13.3px;color:#444;transform:scaleX(0.9000);transform-origin:0 0;">B</div>
<div class="t" style="left:155.68px;top:229.74px;font-size:13.3px;color:#444;transform:scaleX(0.9000);transform-origin:0 0;">C</div>
<div class="t" style="left:203.68px;top:229.74px;font-size:13.3px;color:#444;transform:scaleX(0.9000);transform-origin:0 0;">D</div>
<div class="t" style="left:252.01px;top:229.74px;font-size:13.3px;color:#444;transform:scaleX(0.9000);transform-origin:0 0;">E</div>
<div class="t" style="left:300.34px;top:229.74px;font-size:13.3px;color:#444;transform:scaleX(0.9000);transform-origin:0 0;">F</div>
<div class="t" style="left:353.35px;top:229.74px;font-size:13.3px;color:#444;transform:scaleX(0.9000);transform-origin:0 0;">G</div>
<div class="t" style="left:413.68px;top:229.74px;font-size:13.3px;color:#444;transform:scaleX(0.9000);transform-origin:0 0;">H</div>
<div class="t" style="left:476.34px;top:229.74px;font-size:13.3px;color:#444;transform:scaleX(0.9000);transform-origin:0 0;">I</div>
<div class="t" style="left:535.01px;top:229.74px;font-size:13.3px;color:#444;transform:scaleX(0.9000);transform-origin:0 0;">J</div>
<div class="t" style="left:594.01px;top:229.74px;font-size:13.3px;color:#444;transform:scaleX(0.9000);transform-origin:0 0;">K</div>
<div class="t" style="left:654.67px;top:229.74px;font-size:13.3px;color:#444;transform:scaleX(0.9000);transform-origin:0 0;">L</div>
<div class="t" style="left:713.02px;top:229.74px;font-size:13.3px;color:#444;transform:scaleX(0.9000);transform-origin:0 0;">M</div>
<div class="t" style="left:773.68px;top:229.74px;font-size:13.3px;color:#444;transform:scaleX(0.9000);transform-origin:0 0;">N</div>
<div class="t" style="left:833.35px;top:229.74px;font-size:13.3px;color:#444;transform:scaleX(0.9000);transform-origin:0 0;">O</div>
<div class="t" style="left:894.01px;top:229.74px;font-size:13.3px;color:#444;transform:scaleX(0.9000);transform-origin:0 0;">P</div>
<div class="t" style="left:953.35px;top:229.74px;font-size:13.3px;color:#444;transform:scaleX(0.9000);transform-origin:0 0;">Q</div>
<div class="t" style="left:12.35px;top:250.57px;font-size:13.5px;color:#444;transform:scaleX(0.9200);transform-origin:0 0;">1</div>
<div class="t" style="left:12.35px;top:270.57px;font-size:13.5px;color:#444;transform:scaleX(0.9200);transform-origin:0 0;">2</div>
<div class="t" style="left:12.35px;top:290.57px;font-size:13.5px;color:#444;transform:scaleX(0.9200);transform-origin:0 0;">3</div>
<div class="t" style="left:12.35px;top:310.57px;font-size:13.5px;color:#444;transform:scaleX(0.9200);transform-origin:0 0;">4</div>
<div class="t" style="left:12.35px;top:330.57px;font-size:13.5px;color:#444;transform:scaleX(0.9200);transform-origin:0 0;">5</div>
<div class="t" style="left:12.35px;top:350.57px;font-size:13.5px;color:#444;transform:scaleX(0.9200);transform-origin:0 0;">6</div>
<div class="t" style="left:12.35px;top:370.57px;font-size:13.5px;color:#444;transform:scaleX(0.9200);transform-origin:0 0;">7</div>
<div class="t" style="left:12.35px;top:390.57px;font-size:13.5px;color:#444;transform:scaleX(0.9200);transform-origin:0 0;">8</div>
<div class="t" style="left:12.35px;top:410.57px;font-size:13.5px;color:#444;transform:scaleX(0.9200);transform-origin:0 0;">9</div>
<div class="t" style="left:8.89px;top:430.57px;font-size:13.5px;color:#444;transform:scaleX(0.9200);transform-origin:0 0;">10</div>
<div class="t" style="left:9.35px;top:450.57px;font-size:13.5px;color:#444;transform:scaleX(0.9200);transform-origin:0 0;">11</div>
<div class="t" style="left:8.89px;top:470.57px;font-size:13.5px;color:#444;transform:scaleX(0.9200);transform-origin:0 0;">12</div>
<div class="t" style="left:8.89px;top:490.57px;font-size:13.5px;color:#444;transform:scaleX(0.9200);transform-origin:0 0;">13</div>
<div class="t" style="left:8.89px;top:510.57px;font-size:13.5px;color:#444;transform:scaleX(0.9200);transform-origin:0 0;">14</div>
<div class="t" style="left:8.89px;top:530.57px;font-size:13.5px;color:#444;transform:scaleX(0.9200);transform-origin:0 0;">15</div>
<div class="t" style="left:8.89px;top:550.57px;font-size:13.5px;color:#444;transform:scaleX(0.9200);transform-origin:0 0;">16</div>
<div class="t" style="left:8.89px;top:570.57px;font-size:13.5px;color:#444;transform:scaleX(0.9200);transform-origin:0 0;">17</div>
<div class="t" style="left:8.89px;top:590.57px;font-size:13.5px;color:#444;transform:scaleX(0.9200);transform-origin:0 0;">18</div>
<div class="t" style="left:8.89px;top:610.57px;font-size:13.5px;color:#444;transform:scaleX(0.9200);transform-origin:0 0;">19</div>
<div class="t" style="left:8.89px;top:630.57px;font-size:13.5px;color:#444;transform:scaleX(0.9200);transform-origin:0 0;">20</div>
<div class="t" style="left:8.89px;top:650.57px;font-size:13.5px;color:#444;transform:scaleX(0.9200);transform-origin:0 0;">21</div>
<div class="t" style="left:8.89px;top:670.57px;font-size:13.5px;color:#444;transform:scaleX(0.9200);transform-origin:0 0;">22</div>
<div class="t" style="left:8.89px;top:690.57px;font-size:13.5px;color:#444;transform:scaleX(0.9200);transform-origin:0 0;">23</div>
<div class="t" style="left:91.00px;top:251.84px;font-size:12px;color:#000;font-weight:bold;transform:scaleX(1.0505);transform-origin:0 0;">Type 1</div>
<div class="t" style="left:139.00px;top:251.84px;font-size:12px;color:#000;font-weight:bold;transform:scaleX(1.0505);transform-origin:0 0;">Type 2</div>
<div class="t" style="left:187.00px;top:251.84px;font-size:12px;color:#000;font-weight:bold;transform:scaleX(1.0505);transform-origin:0 0;">Type 3</div>
<div class="t" style="left:235.00px;top:251.84px;font-size:12px;color:#000;font-weight:bold;transform:scaleX(1.0505);transform-origin:0 0;">Type 4</div>
<div class="t" style="left:283.00px;top:251.84px;font-size:12px;color:#000;font-weight:bold;transform:scaleX(1.0505);transform-origin:0 0;">Type 5</div>
<div class="t" style="left:33.50px;top:271.84px;font-size:12px;color:#000;font-weight:bold;transform:scaleX(1.0308);transform-origin:0 0;">Attr 1</div>
<div class="t" style="left:109.36px;top:272.27px;font-size:11.5px;color:#000;">B</div>
<div class="t" style="left:157.36px;top:272.27px;font-size:11.5px;color:#000;">A</div>
<div class="t" style="left:205.36px;top:272.27px;font-size:11.5px;color:#000;">B</div>
<div class="t" style="left:253.36px;top:272.27px;font-size:11.5px;color:#000;">B</div>
<div class="t" style="left:301.36px;top:272.27px;font-size:11.5px;color:#000;">A</div>
<div class="t" style="left:33.50px;top:291.84px;font-size:12px;color:#000;font-weight:bold;transform:scaleX(1.0308);transform-origin:0 0;">Attr 2</div>
<div class="t" style="left:109.36px;top:292.27px;font-size:11.5px;color:#000;">S</div>
<div class="t" style="left:157.36px;top:292.27px;font-size:11.5px;color:#000;">B</div>
<div class="t" style="left:205.36px;top:292.27px;font-size:11.5px;color:#000;">S</div>
<div class="t" style="left:253.36px;top:292.27px;font-size:11.5px;color:#000;">S</div>
<div class="t" style="left:301.36px;top:292.27px;font-size:11.5px;color:#000;">B</div>
<div class="t" style="left:33.50px;top:311.84px;font-size:12px;color:#000;font-weight:bold;transform:scaleX(1.0308);transform-origin:0 0;">Attr 3</div>
<div class="t" style="left:110.00px;top:312.27px;font-size:11.5px;color:#000;">L</div>
<div class="t" style="left:157.36px;top:312.27px;font-size:11.5px;color:#000;">S</div>
<div class="t" style="left:206.00px;top:312.27px;font-size:11.5px;color:#000;">L</div>
<div class="t" style="left:253.36px;top:312.27px;font-size:11.5px;color:#000;">S</div>
<div class="t" style="left:301.36px;top:312.27px;font-size:11.5px;color:#000;">S</div>
<div class="t" style="left:33.50px;top:331.84px;font-size:12px;color:#000;font-weight:bold;transform:scaleX(1.0308);transform-origin:0 0;">Attr 4</div>
<div class="t" style="left:109.36px;top:332.27px;font-size:11.5px;color:#000;">A</div>
<div class="t" style="left:158.00px;top:332.27px;font-size:11.5px;color:#000;">L</div>
<div class="t" style="left:205.36px;top:332.27px;font-size:11.5px;color:#000;">A</div>
<div class="t" style="left:254.00px;top:332.27px;font-size:11.5px;color:#000;">L</div>
<div class="t" style="left:302.00px;top:332.27px;font-size:11.5px;color:#000;">L</div>
<div class="t" style="left:33.50px;top:351.84px;font-size:12px;color:#000;font-weight:bold;transform:scaleX(1.0308);transform-origin:0 0;">Attr 5</div>
<div class="t" style="left:109.36px;top:352.27px;font-size:11.5px;color:#000;">B</div>
<div class="t" style="left:157.36px;top:352.27px;font-size:11.5px;color:#000;">A</div>
<div class="t" style="left:205.36px;top:352.27px;font-size:11.5px;color:#000;">B</div>
<div class="t" style="left:253.36px;top:352.27px;font-size:11.5px;color:#000;">A</div>
<div class="t" style="left:301.36px;top:352.27px;font-size:11.5px;color:#000;">A</div>
<div class="t" style="left:33.50px;top:371.84px;font-size:12px;color:#000;font-weight:bold;transform:scaleX(1.0308);transform-origin:0 0;">Attr 6</div>
<div class="t" style="left:109.36px;top:372.27px;font-size:11.5px;color:#000;">S</div>
<div class="t" style="left:157.36px;top:372.27px;font-size:11.5px;color:#000;">S</div>
<div class="t" style="left:205.36px;top:372.27px;font-size:11.5px;color:#000;">S</div>
<div class="t" style="left:253.36px;top:372.27px;font-size:11.5px;color:#000;">S</div>
<div class="t" style="left:301.36px;top:372.27px;font-size:11.5px;color:#000;">S</div>
<div class="t" style="left:33.50px;top:391.84px;font-size:12px;color:#000;font-weight:bold;transform:scaleX(1.0308);transform-origin:0 0;">Attr 7</div>
<div class="t" style="left:110.00px;top:392.27px;font-size:11.5px;color:#000;">L</div>
<div class="t" style="left:158.00px;top:392.27px;font-size:11.5px;color:#000;">L</div>
<div class="t" style="left:206.00px;top:392.27px;font-size:11.5px;color:#000;">L</div>
<div class="t" style="left:254.00px;top:392.27px;font-size:11.5px;color:#000;">L</div>
<div class="t" style="left:302.00px;top:392.27px;font-size:11.5px;color:#000;">L</div>
<div class="t" style="left:33.50px;top:411.84px;font-size:12px;color:#000;font-weight:bold;transform:scaleX(1.0308);transform-origin:0 0;">Attr 8</div>
<div class="t" style="left:109.36px;top:412.27px;font-size:11.5px;color:#000;">A</div>
<div class="t" style="left:157.36px;top:412.27px;font-size:11.5px;color:#000;">A</div>
<div class="t" style="left:205.36px;top:412.27px;font-size:11.5px;color:#000;">A</div>
<div class="t" style="left:253.36px;top:412.27px;font-size:11.5px;color:#000;">A</div>
<div class="t" style="left:301.36px;top:412.27px;font-size:11.5px;color:#000;">A</div>
<div class="t" style="left:33.50px;top:431.84px;font-size:12px;color:#000;font-weight:bold;transform:scaleX(1.0308);transform-origin:0 0;">Attr 9</div>
<div class="t" style="left:109.36px;top:432.27px;font-size:11.5px;color:#000;">B</div>
<div class="t" style="left:157.36px;top:432.27px;font-size:11.5px;color:#000;">B</div>
<div class="t" style="left:205.36px;top:432.27px;font-size:11.5px;color:#000;">B</div>
<div class="t" style="left:253.36px;top:432.27px;font-size:11.5px;color:#000;">B</div>
<div class="t" style="left:301.36px;top:432.27px;font-size:11.5px;color:#000;">B</div>
<div class="t" style="left:33.50px;top:451.84px;font-size:12px;color:#000;font-weight:bold;transform:scaleX(1.0308);transform-origin:0 0;">Attr 10</div>
<div class="t" style="left:109.36px;top:452.27px;font-size:11.5px;color:#000;">S</div>
<div class="t" style="left:157.36px;top:452.27px;font-size:11.5px;color:#000;">S</div>
<div class="t" style="left:205.36px;top:452.27px;font-size:11.5px;color:#000;">S</div>
<div class="t" style="left:253.36px;top:452.27px;font-size:11.5px;color:#000;">S</div>
<div class="t" style="left:301.36px;top:452.27px;font-size:11.5px;color:#000;">S</div>
<div class="t" style="left:33.50px;top:471.84px;font-size:12px;color:#000;font-weight:bold;transform:scaleX(1.0308);transform-origin:0 0;">Attr 11</div>
<div class="t" style="left:110.00px;top:472.27px;font-size:11.5px;color:#000;">L</div>
<div class="t" style="left:158.00px;top:472.27px;font-size:11.5px;color:#000;">L</div>
<div class="t" style="left:206.00px;top:472.27px;font-size:11.5px;color:#000;">L</div>
<div class="t" style="left:254.00px;top:472.27px;font-size:11.5px;color:#000;">L</div>
<div class="t" style="left:302.00px;top:472.27px;font-size:11.5px;color:#000;">L</div>
<div class="t" style="left:33.50px;top:491.84px;font-size:12px;color:#000;font-weight:bold;transform:scaleX(1.0308);transform-origin:0 0;">Attr 12</div>
<div class="t" style="left:109.36px;top:492.27px;font-size:11.5px;color:#000;">A</div>
<div class="t" style="left:157.36px;top:492.27px;font-size:11.5px;color:#000;">A</div>
<div class="t" style="left:205.36px;top:492.27px;font-size:11.5px;color:#000;">A</div>
<div class="t" style="left:253.36px;top:492.27px;font-size:11.5px;color:#000;">A</div>
<div class="t" style="left:301.36px;top:492.27px;font-size:11.5px;color:#000;">A</div>
<div class="t" style="left:33.50px;top:511.84px;font-size:12px;color:#000;font-weight:bold;transform:scaleX(1.0308);transform-origin:0 0;">Attr 13</div>
<div class="t" style="left:109.36px;top:512.27px;font-size:11.5px;color:#000;">B</div>
<div class="t" style="left:157.36px;top:512.27px;font-size:11.5px;color:#000;">B</div>
<div class="t" style="left:205.36px;top:512.27px;font-size:11.5px;color:#000;">B</div>
<div class="t" style="left:253.36px;top:512.27px;font-size:11.5px;color:#000;">B</div>
<div class="t" style="left:301.36px;top:512.27px;font-size:11.5px;color:#000;">B</div>
<div class="t" style="left:33.50px;top:531.84px;font-size:12px;color:#000;font-weight:bold;transform:scaleX(1.0308);transform-origin:0 0;">Attr 14</div>
<div class="t" style="left:109.36px;top:532.27px;font-size:11.5px;color:#000;">S</div>
<div class="t" style="left:157.36px;top:532.27px;font-size:11.5px;color:#000;">S</div>
<div class="t" style="left:205.36px;top:532.27px;font-size:11.5px;color:#000;">S</div>
<div class="t" style="left:253.36px;top:532.27px;font-size:11.5px;color:#000;">A</div>
<div class="t" style="left:301.36px;top:532.27px;font-size:11.5px;color:#000;">S</div>
<div class="t" style="left:33.50px;top:551.84px;font-size:12px;color:#000;font-weight:bold;transform:scaleX(1.0308);transform-origin:0 0;">Attr 15</div>
<div class="t" style="left:110.00px;top:552.27px;font-size:11.5px;color:#000;">L</div>
<div class="t" style="left:157.36px;top:552.27px;font-size:11.5px;color:#000;">A</div>
<div class="t" style="left:206.00px;top:552.27px;font-size:11.5px;color:#000;">L</div>
<div class="t" style="left:253.36px;top:552.27px;font-size:11.5px;color:#000;">B</div>
<div class="t" style="left:301.36px;top:552.27px;font-size:11.5px;color:#000;">A</div>
<div class="t" style="left:33.50px;top:571.84px;font-size:12px;color:#000;font-weight:bold;transform:scaleX(1.0308);transform-origin:0 0;">Attr 16</div>
<div class="t" style="left:109.36px;top:572.27px;font-size:11.5px;color:#000;">A</div>
<div class="t" style="left:157.36px;top:572.27px;font-size:11.5px;color:#000;">B</div>
<div class="t" style="left:205.36px;top:572.27px;font-size:11.5px;color:#000;">A</div>
<div class="t" style="left:253.36px;top:572.27px;font-size:11.5px;color:#000;">S</div>
<div class="t" style="left:301.36px;top:572.27px;font-size:11.5px;color:#000;">B</div>
<div class="t" style="left:33.50px;top:591.84px;font-size:12px;color:#000;font-weight:bold;transform:scaleX(1.0308);transform-origin:0 0;">Attr 17</div>
<div class="t" style="left:109.36px;top:592.27px;font-size:11.5px;color:#000;">B</div>
<div class="t" style="left:157.36px;top:592.27px;font-size:11.5px;color:#000;">S</div>
<div class="t" style="left:205.36px;top:592.27px;font-size:11.5px;color:#000;">B</div>
<div class="t" style="left:253.36px;top:592.27px;font-size:11.5px;color:#000;">B</div>
<div class="t" style="left:301.36px;top:592.27px;font-size:11.5px;color:#000;">S</div>
<div class="t" style="left:33.50px;top:611.84px;font-size:12px;color:#000;font-weight:bold;transform:scaleX(1.0308);transform-origin:0 0;">Attr 18</div>
<div class="t" style="left:109.36px;top:612.27px;font-size:11.5px;color:#000;">S</div>
<div class="t" style="left:157.36px;top:612.27px;font-size:11.5px;color:#000;">S</div>
<div class="t" style="left:205.36px;top:612.27px;font-size:11.5px;color:#000;">S</div>
<div class="t" style="left:253.36px;top:612.27px;font-size:11.5px;color:#000;">S</div>
<div class="t" style="left:301.36px;top:612.27px;font-size:11.5px;color:#000;">S</div>
<div class="t" style="left:33.50px;top:631.84px;font-size:12px;color:#000;font-weight:bold;transform:scaleX(1.0308);transform-origin:0 0;">Attr 19</div>
<div class="t" style="left:110.00px;top:632.27px;font-size:11.5px;color:#000;">L</div>
<div class="t" style="left:158.00px;top:632.27px;font-size:11.5px;color:#000;">L</div>
<div class="t" style="left:206.00px;top:632.27px;font-size:11.5px;color:#000;">L</div>
<div class="t" style="left:254.00px;top:632.27px;font-size:11.5px;color:#000;">L</div>
<div class="t" style="left:302.00px;top:632.27px;font-size:11.5px;color:#000;">L</div>
<div class="t" style="left:33.50px;top:651.84px;font-size:12px;color:#000;font-weight:bold;transform:scaleX(1.0308);transform-origin:0 0;">Attr 20</div>
<div class="t" style="left:109.36px;top:652.27px;font-size:11.5px;color:#000;">A</div>
<div class="t" style="left:157.36px;top:652.27px;font-size:11.5px;color:#000;">A</div>
<div class="t" style="left:205.36px;top:652.27px;font-size:11.5px;color:#000;">A</div>
<div class="t" style="left:253.36px;top:652.27px;font-size:11.5px;color:#000;">A</div>
<div class="t" style="left:301.36px;top:652.27px;font-size:11.5px;color:#000;">A</div>
<div class="t" style="left:33.50px;top:671.84px;font-size:12px;color:#000;font-weight:bold;transform:scaleX(1.0308);transform-origin:0 0;">Attr 21</div>
<div class="t" style="left:109.36px;top:672.27px;font-size:11.5px;color:#000;">B</div>
<div class="t" style="left:157.36px;top:672.27px;font-size:11.5px;color:#000;">S</div>
<div class="t" style="left:205.36px;top:672.27px;font-size:11.5px;color:#000;">B</div>
<div class="t" style="left:253.36px;top:672.27px;font-size:11.5px;color:#000;">B</div>
<div class="t" style="left:301.36px;top:672.27px;font-size:11.5px;color:#000;">S</div>
<div class="t" style="left:33.50px;top:691.84px;font-size:12px;color:#000;font-weight:bold;transform:scaleX(1.0308);transform-origin:0 0;">Attr 22</div>
<div class="t" style="left:109.36px;top:692.27px;font-size:11.5px;color:#000;">S</div>
<div class="t" style="left:158.00px;top:692.27px;font-size:11.5px;color:#000;">L</div>
<div class="t" style="left:205.36px;top:692.27px;font-size:11.5px;color:#000;">S</div>
<div class="t" style="left:253.36px;top:692.27px;font-size:11.5px;color:#000;">S</div>
<div class="t" style="left:302.00px;top:692.27px;font-size:11.5px;color:#000;">L</div>
<div class="ab" style="left:448px;top:266px;width:360px;height:120px;box-shadow:0 0 3px 1px rgba(0,0,0,0.25);background:#fff"></div>
<div class="ab" style="left:448px;top:266px;width:360px;height:1px;background:#D4D4D4"></div>
<div class="ab" style="left:448px;top:286px;width:360px;height:1px;background:#D4D4D4"></div>
<div class="ab" style="left:448px;top:306px;width:360px;height:1px;background:#D4D4D4"></div>
<div class="ab" style="left:448px;top:326px;width:360px;height:1px;background:#D4D4D4"></div>
<div class="ab" style="left:448px;top:346px;width:360px;height:1px;background:#D4D4D4"></div>
<div class="ab" style="left:448px;top:366px;width:360px;height:1px;background:#D4D4D4"></div>
<div class="ab" style="left:448px;top:386px;width:360px;height:1px;background:#D4D4D4"></div>
<div class="ab" style="left:448px;top:266px;width:1px;height:121px;background:#D4D4D4"></div>
<div class="ab" style="left:508px;top:266px;width:1px;height:121px;background:#D4D4D4"></div>
<div class="ab" style="left:568px;top:266px;width:1px;height:121px;background:#D4D4D4"></div>
<div class="ab" style="left:628px;top:266px;width:1px;height:121px;background:#D4D4D4"></div>
<div class="ab" style="left:688px;top:266px;width:1px;height:121px;background:#D4D4D4"></div>
<div class="ab" style="left:748px;top:266px;width:1px;height:121px;background:#D4D4D4"></div>
<div class="ab" style="left:808px;top:266px;width:1px;height:121px;background:#D4D4D4"></div>
<div class="ab" style="left:509px;top:287px;width:59px;height:19px;background:#63BE7B"></div>
<div class="ab" style="left:569px;top:287px;width:59px;height:19px;background:#FBDBDE"></div>
<div class="ab" style="left:629px;top:287px;width:59px;height:19px;background:#67C07E"></div>
<div class="ab" style="left:689px;top:287px;width:59px;height:19px;background:#FCFCFF"></div>
<div class="ab" style="left:749px;top:287px;width:59px;height:19px;background:#FBDBDE"></div>
<div class="ab" style="left:509px;top:307px;width:59px;height:19px;background:#FBDBDE"></div>
<div class="ab" style="left:569px;top:307px;width:59px;height:19px;background:#63BE7B"></div>
<div class="ab" style="left:629px;top:307px;width:59px;height:19px;background:#FBE0E2"></div>
<div class="ab" style="left:689px;top:307px;width:59px;height:19px;background:#F8696B"></div>
<div class="ab" style="left:749px;top:307px;width:59px;height:19px;background:#82CB96"></div>
<div class="ab" style="left:509px;top:327px;width:59px;height:19px;background:#67C07E"></div>
<div class="ab" style="left:569px;top:327px;width:59px;height:19px;background:#FBE0E2"></div>
<div class="ab" style="left:629px;top:327px;width:59px;height:19px;background:#63BE7B"></div>
<div class="ab" style="left:689px;top:327px;width:59px;height:19px;background:#FCFCFF"></div>
<div class="ab" style="left:749px;top:327px;width:59px;height:19px;background:#FBE0E2"></div>
<div class="ab" style="left:509px;top:347px;width:59px;height:19px;background:#FCFCFF"></div>
<div class="ab" style="left:569px;top:347px;width:59px;height:19px;background:#F8696B"></div>
<div class="ab" style="left:629px;top:347px;width:59px;height:19px;background:#FCFCFF"></div>
<div class="ab" style="left:689px;top:347px;width:59px;height:19px;background:#63BE7B"></div>
<div class="ab" style="left:749px;top:347px;width:59px;height:19px;background:#F97C7E"></div>
<div class="ab" style="left:509px;top:367px;width:59px;height:19px;background:#FBDBDE"></div>
<div class="ab" style="left:569px;top:367px;width:59px;height:19px;background:#82CB96"></div>
<div class="ab" style="left:629px;top:367px;width:59px;height:19px;background:#FBE0E2"></div>
<div class="ab" style="left:689px;top:367px;width:59px;height:19px;background:#F97C7E"></div>
<div class="ab" style="left:749px;top:367px;width:59px;height:19px;background:#63BE7B"></div>
<div class="t" style="left:512.50px;top:270.73px;font-size:13.2px;color:#000;transform:scaleX(1.0306);transform-origin:0 0;">Type 1</div>
<div class="t" style="left:572.50px;top:270.73px;font-size:13.2px;color:#000;transform:scaleX(1.0306);transform-origin:0 0;">Type 2</div>
<div class="t" style="left:632.50px;top:270.73px;font-size:13.2px;color:#000;transform:scaleX(1.0306);transform-origin:0 0;">Type 3</div>
<div class="t" style="left:692.50px;top:270.73px;font-size:13.2px;color:#000;transform:scaleX(1.0306);transform-origin:0 0;">Type 4</div>
<div class="t" style="left:752.50px;top:270.73px;font-size:13.2px;color:#000;transform:scaleX(1.0306);transform-origin:0 0;">Type 5</div>
<div class="t" style="left:450.80px;top:290.63px;font-size:13.2px;color:#000;transform:scaleX(1.0483);transform-origin:0 0;">Type 1</div>
<div class="t" style="left:511.50px;top:290.63px;font-size:13.2px;color:#000;transform:scaleX(1.0430);transform-origin:0 0;">100.00%</div>
<div class="t" style="left:579.15px;top:290.63px;font-size:13.2px;color:#000;transform:scaleX(1.0430);transform-origin:0 0;">54.00%</div>
<div class="t" style="left:639.15px;top:290.63px;font-size:13.2px;color:#000;transform:scaleX(1.0430);transform-origin:0 0;">99.00%</div>
<div class="t" style="left:699.15px;top:290.63px;font-size:13.2px;color:#000;transform:scaleX(1.0430);transform-origin:0 0;">61.00%</div>
<div class="t" style="left:759.15px;top:290.63px;font-size:13.2px;color:#000;transform:scaleX(1.0430);transform-origin:0 0;">54.00%</div>
<div class="t" style="left:450.80px;top:310.63px;font-size:13.2px;color:#000;transform:scaleX(1.0483);transform-origin:0 0;">Type 2</div>
<div class="t" style="left:519.15px;top:310.63px;font-size:13.2px;color:#000;transform:scaleX(1.0430);transform-origin:0 0;">54.00%</div>
<div class="t" style="left:571.50px;top:310.63px;font-size:13.2px;color:#000;transform:scaleX(1.0430);transform-origin:0 0;">100.00%</div>
<div class="t" style="left:639.15px;top:310.63px;font-size:13.2px;color:#000;transform:scaleX(1.0430);transform-origin:0 0;">55.00%</div>
<div class="t" style="left:699.15px;top:310.63px;font-size:13.2px;color:#000;transform:scaleX(1.0430);transform-origin:0 0;">30.00%</div>
<div class="t" style="left:759.15px;top:310.63px;font-size:13.2px;color:#000;transform:scaleX(1.0430);transform-origin:0 0;">92.00%</div>
<div class="t" style="left:450.80px;top:330.63px;font-size:13.2px;color:#000;transform:scaleX(1.0483);transform-origin:0 0;">Type 3</div>
<div class="t" style="left:519.15px;top:330.63px;font-size:13.2px;color:#000;transform:scaleX(1.0430);transform-origin:0 0;">99.00%</div>
<div class="t" style="left:579.15px;top:330.63px;font-size:13.2px;color:#000;transform:scaleX(1.0430);transform-origin:0 0;">55.00%</div>
<div class="t" style="left:631.50px;top:330.63px;font-size:13.2px;color:#000;transform:scaleX(1.0430);transform-origin:0 0;">100.00%</div>
<div class="t" style="left:699.15px;top:330.63px;font-size:13.2px;color:#000;transform:scaleX(1.0430);transform-origin:0 0;">61.00%</div>
<div class="t" style="left:759.15px;top:330.63px;font-size:13.2px;color:#000;transform:scaleX(1.0430);transform-origin:0 0;">55.00%</div>
<div class="t" style="left:450.80px;top:350.63px;font-size:13.2px;color:#000;transform:scaleX(1.0483);transform-origin:0 0;">Type 4</div>
<div class="t" style="left:519.15px;top:350.63px;font-size:13.2px;color:#000;transform:scaleX(1.0430);transform-origin:0 0;">61.00%</div>
<div class="t" style="left:579.15px;top:350.63px;font-size:13.2px;color:#000;transform:scaleX(1.0430);transform-origin:0 0;">30.00%</div>
<div class="t" style="left:639.15px;top:350.63px;font-size:13.2px;color:#000;transform:scaleX(1.0430);transform-origin:0 0;">61.00%</div>
<div class="t" style="left:691.50px;top:350.63px;font-size:13.2px;color:#000;transform:scaleX(1.0430);transform-origin:0 0;">100.00%</div>
<div class="t" style="left:759.15px;top:350.63px;font-size:13.2px;color:#000;transform:scaleX(1.0430);transform-origin:0 0;">34.00%</div>
<div class="t" style="left:450.80px;top:370.63px;font-size:13.2px;color:#000;transform:scaleX(1.0483);transform-origin:0 0;">Type 5</div>
<div class="t" style="left:519.15px;top:370.63px;font-size:13.2px;color:#000;transform:scaleX(1.0430);transform-origin:0 0;">54.00%</div>
<div class="t" style="left:579.15px;top:370.63px;font-size:13.2px;color:#000;transform:scaleX(1.0430);transform-origin:0 0;">92.00%</div>
<div class="t" style="left:639.15px;top:370.63px;font-size:13.2px;color:#000;transform:scaleX(1.0430);transform-origin:0 0;">55.00%</div>
<div class="t" style="left:699.15px;top:370.63px;font-size:13.2px;color:#000;transform:scaleX(1.0430);transform-origin:0 0;">34.00%</div>
<div class="t" style="left:751.50px;top:370.63px;font-size:13.2px;color:#000;transform:scaleX(1.0430);transform-origin:0 0;">100.00%</div>
<div class="ab" style="left:78px;top:240px;width:266px;height:33px;border:3px solid #ED7D31"></div>
<div class="ab" style="left:508px;top:259px;width:299px;height:30px;border:3px solid #ED7D31"></div>
<div class="ab" style="left:440px;top:286px;width:67px;height:108px;border:3px solid #ED7D31"></div>
<div class="ab" style="left:975px;top:226px;width:25px;height:467px;background:#fff"></div>
<div class="ab" style="left:974px;top:247px;width:1px;height:446px;background:#ABABAB"></div>
<div class="ab" style="left:978px;top:247px;width:19px;height:446px;background:#F0F0F0"></div>
<div class="ab" style="left:978px;top:228px;width:19px;height:19px;border:1px solid #C6C6C6;background:#fff"></div>
<svg style="left:983px;top:235px" width="9" height="5" viewBox="0 0 9 5"><path d="M0 5 H9 L4.5 0Z" fill="#777"/></svg>
<div class="ab" style="left:978px;top:247px;width:19px;height:92px;border:1px solid #ABABAB;background:#fff"></div>
<div class="ab" style="left:978px;top:675px;width:19px;height:18px;border:1px solid #C6C6C6;background:#fff"></div>
<svg style="left:983px;top:682px" width="9" height="5" viewBox="0 0 9 5"><path d="M0 0 H9 L4.5 5Z" fill="#777"/></svg>
<div class="ab" style="left:1px;top:694px;width:999px;height:28px;background:#F5F5F5"></div>
<div class="ab" style="left:1px;top:693px;width:974px;height:1px;background:#ABABAB"></div>
<div class="ab" style="left:975px;top:694px;width:25px;height:28px;background:#fff"></div>
<svg style="left:29px;top:703px" width="6" height="10" viewBox="0 0 6 10"><path d="M5.5 0 V10 L0 5Z" fill="#C8C8C8"/></svg>
<svg style="left:58px;top:703px" width="6" height="10" viewBox="0 0 6 10"><path d="M0 0 V10 L5.5 5Z" fill="#217346"/></svg>
<div class="ab" style="left:104px;top:697px;width:1px;height:21px;background:#ABABAB"></div>
<div class="ab" style="left:183px;top:697px;width:1px;height:21px;background:#ABABAB"></div>
<div class="ab" style="left:262px;top:697px;width:1px;height:21px;background:#ABABAB"></div>
<div class="ab" style="left:341px;top:697px;width:1px;height:21px;background:#ABABAB"></div>
<div class="ab" style="left:420px;top:697px;width:1px;height:21px;background:#ABABAB"></div>
<div class="ab" style="left:499px;top:697px;width:1px;height:21px;background:#ABABAB"></div>
<div class="ab" style="left:107px;top:696px;width:74px;height:22px;background:#F4B183"></div>
<div class="t" style="left:118.75px;top:697.46px;font-size:16px;color:#000;">Sheet1</div>
<div class="ab" style="left:186px;top:696px;width:74px;height:22px;background:#F4B183"></div>
<div class="t" style="left:197.75px;top:697.46px;font-size:16px;color:#000;">Sheet2</div>
<div class="ab" style="left:265px;top:696px;width:74px;height:22px;background:#F4B183"></div>
<div class="t" style="left:276.75px;top:697.46px;font-size:16px;color:#000;">Sheet3</div>
<div class="ab" style="left:344px;top:696px;width:74px;height:22px;background:#F4B183"></div>
<div class="t" style="left:355.75px;top:697.46px;font-size:16px;color:#000;">Sheet4</div>
<div class="ab" style="left:423px;top:696px;width:74px;height:22px;background:#F4B183"></div>
<div class="t" style="left:434.75px;top:697.46px;font-size:16px;color:#000;">Sheet5</div>
<div class="ab" style="left:502px;top:696px;width:25px;height:22px;background:#F4B183;overflow:hidden"></div>
<div class="ab" style="left:502px;top:696px;width:25px;height:22px;overflow:hidden"><div class="t" style="left:9px;top:1.46px;font-size:16px;color:#000">Sheet6</div></div>
<div class="t" style="left:534.00px;top:697.46px;font-size:16px;color:#217346;transform:scaleX(1.0123);transform-origin:0 0;">...</div>
<svg style="left:559px;top:698px" width="20" height="20" viewBox="0 0 20 20"><circle cx="10" cy="10" r="9" fill="none" stroke="#777" stroke-width="1.5"/><path d="M10 5 V15 M5 10 H15" stroke="#777" stroke-width="1.8"/></svg>
<div class="ab" style="left:598px;top:702px;width:2px;height:2px;background:#BBB"></div>
<div class="ab" style="left:598px;top:706.5px;width:2px;height:2px;background:#BBB"></div>
<div class="ab" style="left:598px;top:711px;width:2px;height:2px;background:#BBB"></div>
<div class="ab" style="left:616px;top:698px;width:20px;height:19px;border:1px solid #C6C6C6;background:#fff"></div>
<svg style="left:622px;top:703px" width="5" height="9" viewBox="0 0 5 9"><path d="M5 0 V9 L0 4.5Z" fill="#777"/></svg>
<div class="ab" style="left:635px;top:698px;width:300px;height:19px;border:1px solid #ABABAB;background:#fff"></div>
<div class="ab" style="left:935px;top:698px;width:21px;height:19px;background:#E6E6E6"></div>
<div class="ab" style="left:956px;top:698px;width:19px;height:19px;border:1px solid #C6C6C6;background:#fff"></div>
<svg style="left:963px;top:703px" width="5" height="9" viewBox="0 0 5 9"><path d="M0 0 V9 L5 4.5Z" fill="#777"/></svg>
<div class="ab" style="left:0px;top:722px;width:1001px;height:28px;background:#217346"></div>
<div class="t" style="left:8.40px;top:729.42px;font-size:12.5px;color:#FFFFFF;transform:scaleX(0.8870);transform-origin:0 0;">READY</div>
<svg style="left:68px;top:727px" width="16" height="15" viewBox="0 0 16 15"><circle cx="4" cy="4" r="3.7" fill="#E8F0EB"/><path d="M1.5 7 V14.5 H15.5 V1.5 H7.5" fill="none" stroke="#E8F0EB" stroke-width="1.2"/><rect x="7" y="1" width="8.5" height="4" fill="#E8F0EB"/><g fill="#E8F0EB"><rect x="4" y="8" width="2" height="1.3"/><rect x="7.5" y="8" width="2" height="1.3"/><rect x="11" y="8" width="2" height="1.3"/><rect x="4" y="11" width="2" height="1.3"/><rect x="7.5" y="11" width="2" height="1.3"/><rect x="11" y="11" width="2" height="1.3"/></g></svg>
<div class="t" style="left:338.20px;top:729.42px;font-size:12.5px;color:#FFFFFF;transform:scaleX(0.9454);transform-origin:0 0;">AVERAGE: 0.676</div>
<div class="t" style="left:490.00px;top:729.42px;font-size:12.5px;color:#FFFFFF;">COUNT: 35</div>
<div class="t" style="left:570.00px;top:729.42px;font-size:12.5px;color:#FFFFFF;transform:scaleX(0.9890);transform-origin:0 0;">SUM: 16.9</div>
<div class="ab" style="left:656px;top:723px;width:41px;height:25px;background:#0F5F30"></div>
<svg style="left:669px;top:729px" width="13" height="12" viewBox="0 0 13 12"><path d="M0.5 0.5 H12.5 V11.5 H0.5Z M0.5 4.2 H12.5 M0.5 7.8 H12.5 M4.5 0.5 V11.5 M8.5 0.5 V11.5" fill="none" stroke="#fff" stroke-width="1"/></svg>
<svg style="left:710px;top:728px" width="14" height="14" viewBox="0 0 14 14"><rect x="0.5" y="0.5" width="13" height="12.5" fill="none" stroke="#fff"/><rect x="3.5" y="2.5" width="7.2" height="8.5" fill="none" stroke="#fff"/><path d="M5 4.8 H9.3 M5 6.8 H9.3 M5 8.8 H9.3" stroke="#fff"/></svg>
<svg style="left:751px;top:728px" width="14" height="14" viewBox="0 0 14 14"><rect x="0.5" y="0.5" width="13" height="12.5" fill="none" stroke="#fff"/><rect x="1" y="1" width="3.6" height="7" fill="#EEF2EF"/><rect x="5.4" y="1" width="3.6" height="7" fill="#EEF2EF"/><path d="M1 8 H9" stroke="#fff"/></svg>
<div class="ab" style="left:784px;top:734px;width:9px;height:2px;background:#fff"></div>
<div class="ab" style="left:797px;top:734px;width:125px;height:1px;background:#F0F5F2"></div>
<div class="ab" style="left:847px;top:728px;width:5px;height:14px;background:#fff"></div>
<div class="ab" style="left:859px;top:731px;width:1px;height:8px;background:#fff"></div>
<div class="ab" style="left:926px;top:734px;width:12px;height:2.5px;background:#fff"></div>
<div class="ab" style="left:930.8px;top:729px;width:2.5px;height:12px;background:#fff"></div>
<div class="t" style="left:953.30px;top:729.42px;font-size:12.5px;color:#FFFFFF;transform:scaleX(0.9393);transform-origin:0 0;">85%</div>
<div class="ab" style="left:812px;top:390px;width:28px;height:28px;border:1px solid #217346;background:#86BFA0"></div>
<svg style="left:812px;top:390px" width="28" height="28" viewBox="0 0 28 28"><rect x="6" y="8" width="16.5" height="13.5" fill="#fff"/><path d="M5.5 8 V21.5 H22.3 V6" fill="none" stroke="#777"/><rect x="5" y="5.2" width="17.8" height="2.8" fill="#777"/><rect x="10.3" y="9" width="6.7" height="2.7" fill="#D9572F"/><rect x="10.3" y="13" width="9.7" height="2.9" fill="#4A7EBB"/><rect x="10.3" y="17.2" width="7.7" height="2.7" fill="#5FA287"/><path d="M11.5 3.8 H7.2 L3.8 10.9 H7.2 L3.6 17.8 L11.6 8.4 H8.4 Z" fill="#F0C67F" stroke="#86BFA0" stroke-width="0.6"/></svg>
<div class="ab" style="left:569px;top:429px;width:408px;height:189px;overflow:hidden;"><div class="ab" style="left:0;top:0;width:430px;height:189px;border:1px solid #217346;background:#fff;box-shadow:0 1px 3px rgba(0,0,0,0.15)"></div></div>
<svg style="left:818px;top:420px" width="20" height="11" viewBox="0 0 20 11"><path d="M0 10 L9.5 0.5 L19 10" fill="#fff" stroke="#217346" stroke-width="1"/><rect x="1" y="10" width="17" height="2" fill="#fff"/></svg>
<div class="t" style="left:583.70px;top:447.75px;font-size:14px;color:#217346;font-weight:bold;transform:scaleX(1.0620);transform-origin:0 0;">FORMATTING</div>
<div class="ab" style="left:582px;top:445px;width:101px;height:19px;border:1px dotted #333"></div>
<div class="t" style="left:708.30px;top:447.75px;font-size:14px;color:#555;transform:scaleX(0.9423);transform-origin:0 0;">CHARTS</div>
<div class="t" style="left:790.30px;top:447.75px;font-size:14px;color:#555;transform:scaleX(0.9593);transform-origin:0 0;">TOTALS</div>
<div class="t" style="left:869.20px;top:447.75px;font-size:14px;color:#555;transform:scaleX(0.9307);transform-origin:0 0;">TABLES</div>
<div class="ab" style="left:949px;top:440px;width:28px;height:30px;overflow:hidden"><div class="t" style="left:0.5px;top:7.75px;font-size:14px;color:#555;transform:scaleX(0.9307);transform-origin:0 0">SPARKLINES</div></div>
<div class="ab" style="left:693px;top:442px;width:1px;height:23px;background:#DADADA"></div>
<div class="ab" style="left:776px;top:442px;width:1px;height:23px;background:#DADADA"></div>
<div class="ab" style="left:854px;top:442px;width:1px;height:23px;background:#DADADA"></div>
<div class="ab" style="left:932px;top:442px;width:1px;height:23px;background:#DADADA"></div>
<div class="ab" style="left:659px;top:482px;width:76px;height:92px;background:#D3EDE0"></div>
<div class="t" style="left:590.00px;top:535.95px;font-size:14px;color:#4A4A4A;">Data Bars</div>
<div class="t" style="left:678.90px;top:535.95px;font-size:14px;color:#4A4A4A;transform:scaleX(1.0761);transform-origin:0 0;">Color</div>
<div class="t" style="left:679.30px;top:555.95px;font-size:14px;color:#4A4A4A;transform:scaleX(0.9880);transform-origin:0 0;">Scale</div>
<div class="t" style="left:746.00px;top:535.55px;font-size:14px;color:#4A4A4A;transform:scaleX(1.0318);transform-origin:0 0;">Icon Set</div>
<div class="t" style="left:824.00px;top:535.55px;font-size:14px;color:#4A4A4A;transform:scaleX(1.0198);transform-origin:0 0;">Greater</div>
<div class="t" style="left:833.50px;top:555.45px;font-size:14px;color:#4A4A4A;transform:scaleX(0.9715);transform-origin:0 0;">Than</div>
<div class="t" style="left:896.40px;top:535.55px;font-size:14px;color:#4A4A4A;transform:scaleX(1.0462);transform-origin:0 0;">Top 10%</div>
<div class="t" style="left:581.80px;top:595.92px;font-size:12.5px;color:#707070;transform:scaleX(1.0597);transform-origin:0 0;">Conditional Formatting uses rules to highlight interesting data.</div>
<svg style="left:602px;top:490px" width="38" height="37" viewBox="0 0 38 37"><rect x="0.5" y="0.5" width="36" height="35" fill="#fff"/><path d="M0.5 7.5 H36.5 M0.5 14.5 H36.5 M0.5 21.5 H36.5 M0.5 28.5 H36.5 M9.5 0.5 V35.5 M27.5 0.5 V35.5 " stroke="#A6A6A6" fill="none"/><rect x="0.5" y="0.5" width="36" height="35" fill="none" stroke="#8C8C8C"/><rect x="10" y="1" width="12" height="6" fill="#4A7EBB"/><path d="M23.5 4 H26.5" stroke="#222" stroke-width="1.2"/><rect x="10" y="8" width="5" height="6" fill="#4A7EBB"/><path d="M23.5 11 H26.5" stroke="#222" stroke-width="1.2"/><rect x="10" y="15" width="9" height="6" fill="#4A7EBB"/><path d="M23.5 18 H26.5" stroke="#222" stroke-width="1.2"/><rect x="10" y="22" width="12" height="6" fill="#4A7EBB"/><path d="M23.5 25 H26.5" stroke="#222" stroke-width="1.2"/><rect x="10" y="29" width="9" height="6" fill="#4A7EBB"/><path d="M23.5 32 H26.5" stroke="#222" stroke-width="1.2"/></svg>
<svg style="left:678px;top:490px" width="38" height="37" viewBox="0 0 38 37"><rect x="0.5" y="0.5" width="36" height="35" fill="#fff"/><path d="M0.5 7.5 H36.5 M0.5 14.5 H36.5 M0.5 21.5 H36.5 M0.5 28.5 H36.5 M9.5 0.5 V35.5 M27.5 0.5 V35.5 " stroke="#A6A6A6" fill="none"/><rect x="0.5" y="0.5" width="36" height="35" fill="none" stroke="#8C8C8C"/><rect x="10" y="1" width="17" height="6" fill="#4A7EBB"/><path d="M17 4 H25" stroke="#333" stroke-width="1.2"/><rect x="10" y="8" width="17" height="6" fill="#5FA287"/><path d="M17 11 H25" stroke="#333" stroke-width="1.2"/><rect x="10" y="15" width="17" height="6" fill="#F0C67F"/><path d="M17 18 H25" stroke="#333" stroke-width="1.2"/><rect x="10" y="22" width="17" height="6" fill="#E97E27"/><path d="M17 25 H25" stroke="#333" stroke-width="1.2"/><rect x="10" y="29" width="17" height="6" fill="#D9572F"/><path d="M17 32 H25" stroke="#333" stroke-width="1.2"/></svg>
<svg style="left:754px;top:490px" width="39" height="37" viewBox="0 0 39 37"><rect x="0.5" y="0.5" width="37" height="35" fill="#fff"/><path d="M0.5 7.5 H37.5 M0.5 14.5 H37.5 M0.5 21.5 H37.5 M0.5 28.5 H37.5 M10.5 0.5 V35.5 M27.5 0.5 V35.5 " stroke="#A6A6A6" fill="none"/><rect x="0.5" y="0.5" width="37" height="35" fill="none" stroke="#8C8C8C"/><circle cx="13.5" cy="4" r="1.6" fill="#5FA287"/><path d="M17 4.5 H25" stroke="#555"/><circle cx="13.5" cy="11" r="1.6" fill="#E97E27"/><path d="M17 11.5 H25" stroke="#555"/><circle cx="13.5" cy="18" r="1.6" fill="#5FA287"/><path d="M17 18.5 H25" stroke="#555"/><circle cx="13.5" cy="25" r="1.6" fill="#E97E27"/><path d="M17 25.5 H25" stroke="#555"/><circle cx="13.5" cy="32" r="1.6" fill="#5FA287"/><path d="M17 32.5 H25" stroke="#555"/></svg>
<svg style="left:830px;top:490px" width="39" height="37" viewBox="0 0 39 37"><rect x="0.5" y="0.5" width="37" height="35" fill="#fff"/><rect x="10" y="15" width="18" height="6" fill="#F0C67F"/><path d="M0.5 7.5 H37.5 M0.5 14.5 H37.5 M0.5 21.5 H37.5 M0.5 28.5 H37.5 M9.5 0.5 V35.5 M27.5 0.5 V35.5 " stroke="#A6A6A6" fill="none"/><rect x="0.5" y="0.5" width="37" height="35" fill="none" stroke="#8C8C8C"/><rect x="19.5" y="21.5" width="19" height="16" fill="#fff" stroke="#8C8C8C"/><path d="M25.5 25 L32 29.5 L25.5 34" fill="none" stroke="#444" stroke-width="1.2"/></svg>
<svg style="left:906px;top:490px" width="38" height="37" viewBox="0 0 38 37"><rect x="0.5" y="0.5" width="36" height="35" fill="#fff"/><rect x="9.5" y="0.5" width="18" height="20" fill="#F0C67F"/><path d="M0.5 7.5 H36.5 M0.5 14.5 H36.5 M0.5 21.5 H36.5 M0.5 28.5 H36.5 M9.5 0.5 V35.5 M27.5 0.5 V35.5 " stroke="#A6A6A6" fill="none"/><rect x="0.5" y="0.5" width="36" height="35" fill="none" stroke="#8C8C8C"/><path d="M18.5 18 V4 M13.5 9 L18.5 3.5 L23.5 9" fill="none" stroke="#555" stroke-width="2"/><rect x="19.5" y="21.5" width="19" height="16" fill="#fff" stroke="#8C8C8C"/><text x="23.3" y="34.2" font-family="Liberation Sans" font-size="14.5" fill="#333" textLength="11.5" lengthAdjust="spacingAndGlyphs">%</text></svg>
<svg style="left:694px;top:516px" width="14" height="20" viewBox="0 0 14 20"><path d="M1 1 V15 L4.5 11.5 L7.5 18.5 L10 17.5 L7 10.5 H12Z" fill="#fff" stroke="#000" stroke-width="1"/></svg>
</body></html>
